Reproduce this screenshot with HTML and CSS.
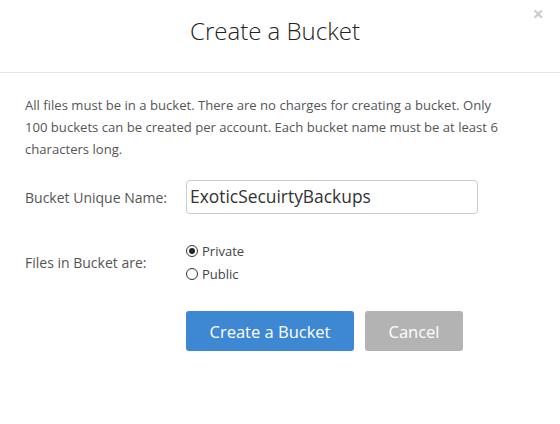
FILE: index.html
```html
<!DOCTYPE html>
<html>
<head>
<meta charset="utf-8">
<link rel="stylesheet" href="styles.css">
</head>
<body>
<div class="modal">
  <div class="header">
    <h1 class="title">Create a Bucket</h1>
    <span class="close">&times;</span>
  </div>
  <div class="body">
    <p class="intro">All files must be in a bucket. There are no charges for creating a bucket. Only 100 buckets can be created per account. Each bucket name must be at least 6 characters long.</p>
    <div class="row name-row">
      <label class="label">Bucket Unique Name:</label>
      <input class="input" type="text" value="ExoticSecuirtyBackups">
    </div>
    <div class="row radio-row">
      <label class="label">Files in Bucket are:</label>
      <div class="radios">
        <label class="radio"><span class="dot checked"></span>Private</label>
        <label class="radio"><span class="dot"></span>Public</label>
      </div>
    </div>
    <div class="actions">
      <button class="btn primary">Create a Bucket</button>
      <button class="btn secondary">Cancel</button>
    </div>
  </div>
</div>
</body>
</html>
```
FILE: styles.css
```css
* { box-sizing: border-box; }
html, body { margin: 0; padding: 0; background: #fff; }
body { font-family: "Open Sans", "Liberation Sans", sans-serif; color: #555; width: 560px; height: 424px; overflow: hidden; }
.modal { width: 560px; }
.header { position: relative; height: 73px; border-bottom: 1px solid #e5e5e5; display: flex; align-items: center; justify-content: center; padding-right: 10px; }
.title { margin: 0; font-weight: 300; font-size: 24px; color: #222; line-height: 1; padding-bottom: 10px; }
.close { position: absolute; right: 16px; top: 0px; font-size: 20px; color: #ccc; font-weight: 700; }
.body { padding: 21px 25px 0 25px; }
.intro { margin: 0; max-width: 485px; font-size: 13.1px; line-height: 22px; color: #555; }
.row { display: flex; align-items: center; }
.label { width: 161px; font-size: 14px; color: #555; }
.name-row { margin-top: 20px; }
.input { width: 292px; height: 34px; border: 1px solid #ccc; border-radius: 4px; font-family: inherit; font-size: 17.4px; color: #333; padding: 0 4px 2px 3px; outline: none; }
.radio-row { margin-top: 27px; align-items: center; }
.radios { display: flex; flex-direction: column; gap: 5px; padding-top: 1px; }
.radio { display: flex; align-items: center; font-size: 13px; color: #444; line-height: 18px; }
.dot { width: 12px; height: 12px; border: 1px solid #333; border-radius: 50%; margin-right: 4px; position: relative; }
.dot.checked::after { content: ""; position: absolute; left: 2px; top: 2px; width: 6px; height: 6px; border-radius: 50%; background: #222; }
.actions { display: flex; gap: 11px; margin-top: 28px; padding-left: 161px; }
.btn { height: 40px; border: none; border-radius: 3px; color: #fff; font-family: inherit; font-size: 16.5px; padding: 0; }
.primary { width: 168px; background: #3d87d3; }
.secondary { width: 98px; background: #b3b3b3; }
```
